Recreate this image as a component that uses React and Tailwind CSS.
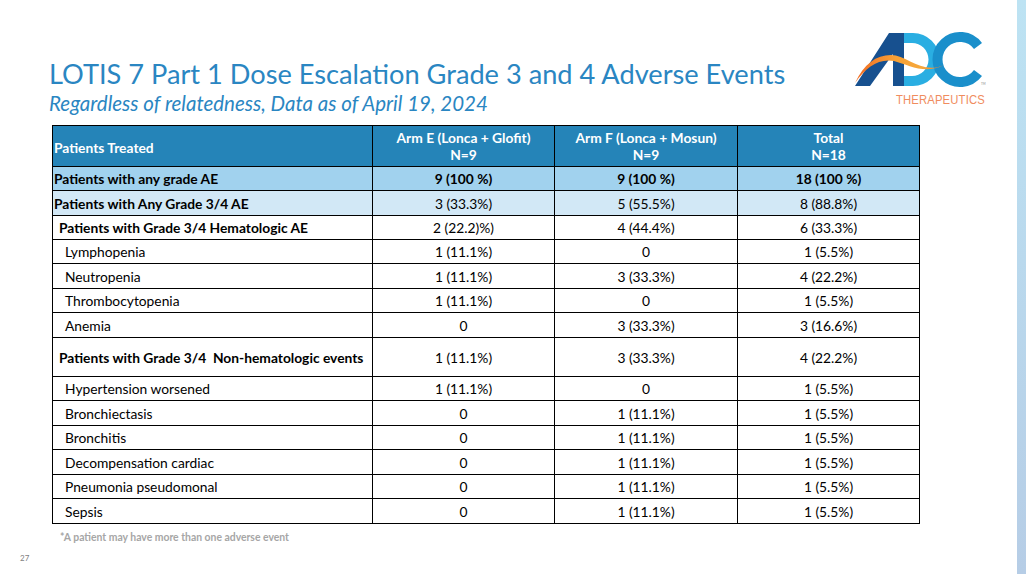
import React from "react";

const font = { fontFamily: "Lato, 'Open Sans', 'Liberation Sans', sans-serif" };

const rows = [
  { label: "Patients with any grade AE", e: "9 (100 %)", f: "9 (100 %)", t: "18 (100 %)", kind: "a" },
  { label: "Patients with Any Grade 3/4 AE", e: "3 (33.3%)", f: "5 (55.5%)", t: "8 (88.8%)", kind: "b" },
  { label: "Patients with Grade 3/4 Hematologic AE", e: "2 (22.2)%)", f: "4 (44.4%)", t: "6 (33.3%)", kind: "c" },
  { label: "Lymphopenia", e: "1 (11.1%)", f: "0", t: "1 (5.5%)", kind: "d" },
  { label: "Neutropenia", e: "1 (11.1%)", f: "3 (33.3%)", t: "4 (22.2%)", kind: "d" },
  { label: "Thrombocytopenia", e: "1 (11.1%)", f: "0", t: "1 (5.5%)", kind: "d" },
  { label: "Anemia", e: "0", f: "3 (33.3%)", t: "3 (16.6%)", kind: "d" },
  { label: "Patients with Grade 3/4\u00a0 Non-hematologic events", e: "1 (11.1%)", f: "3 (33.3%)", t: "4 (22.2%)", kind: "e" },
  { label: "Hypertension worsened", e: "1 (11.1%)", f: "0", t: "1 (5.5%)", kind: "d" },
  { label: "Bronchiectasis", e: "0", f: "1 (11.1%)", t: "1 (5.5%)", kind: "d" },
  { label: "Bronchitis", e: "0", f: "1 (11.1%)", t: "1 (5.5%)", kind: "d" },
  { label: "Decompensation cardiac", e: "0", f: "1 (11.1%)", t: "1 (5.5%)", kind: "d" },
  { label: "Pneumonia pseudomonal", e: "0", f: "1 (11.1%)", t: "1 (5.5%)", kind: "d" },
  { label: "Sepsis", e: "0", f: "1 (11.1%)", t: "1 (5.5%)", kind: "d" },
];

const heights = [24, 25, 24, 24, 25, 24, 25, 39, 24, 25, 24, 25, 24, 25];

function rowBg(kind) {
  if (kind === "a") return "bg-[#a1d2ee]";
  if (kind === "b") return "bg-[#d2e8f6]";
  return "bg-white";
}

function labelCls(kind) {
  if (kind === "a" || kind === "b") return "pl-[1px] font-bold";
  if (kind === "c" || kind === "e") return "pl-[6px] font-bold";
  return "pl-[12px]";
}

function valCls(kind) {
  if (kind === "a") return "font-bold";
  return "";
}

function Logo() {
  return (
    <div className="flex flex-col items-end pt-[27px] mr-[31px]">
      <svg width="136" height="62" viewBox="852 26 136 62">
        <defs>
          <linearGradient id="sw" x1="0" y1="0" x2="1" y2="0">
            <stop offset="0" stopColor="#f26a22" />
            <stop offset="0.45" stopColor="#f7a035" />
            <stop offset="0.75" stopColor="#f6a83b" />
            <stop offset="1" stopColor="#ef7c2a" />
          </linearGradient>
        </defs>
        {/* D */}
        <path
          d="M903 32 H915 A26.5 26.5 0 0 1 915 85 H903 V75 H914 A16.5 16.5 0 0 0 914 42 H903 Z"
          fill="#2aaee2"
        />
        {/* C */}
        <path
          d="M980 45 A22.5 22.5 0 1 0 980 72"
          fill="none"
          stroke="#1a8fcb"
          strokeWidth="10"
        />
        {/* A */}
        <path d="M857 85 L891 32 L906 32 L906 85 L895 85 L895 53 L872 85 Z" fill="#17508f" />
        {/* swoosh */}
        <path
          d="M857 82 C866 63 878 54 893 54 C909 54 924 74 946 64 C927 74 911 64 896 60 C881 57 868 66 857 82 Z"
          fill="url(#sw)"
        />
        <text x="983" y="84" fontSize="3" fill="#888">TM</text>
      </svg>
      <div
        className="mt-[4px] text-[12.5px] leading-[14px] tracking-[0.2px] text-[#f08c5e] mr-[1px]"
        style={{ fontFamily: "'Liberation Sans', Arial, sans-serif", transform: "scaleX(0.9)", transformOrigin: "right" }}
      >
        THERAPEUTICS
      </div>
    </div>
  );
}

export default function App() {
  return (
    <div className="w-[1026px] h-[574px] bg-white flex overflow-hidden" style={font}>
      <div className="flex-1 flex flex-col relative">
        <div className="flex justify-between items-start">
          <div className="pl-[49px] pt-[57px]">
            <div className="text-[27.2px] leading-[34px] text-[#2a86c2] whitespace-nowrap">
              LOTIS 7 Part 1 Dose Escalation Grade 3 and 4 Adverse Events
            </div>
            <div className="text-[20.5px] leading-[24px] italic text-[#2a86c2] whitespace-nowrap">
              Regardless of relatedness, Data as of April 19, 2024
            </div>
          </div>
          <Logo />
        </div>
        <div className="pl-[52px] mt-[auto]">
          <table className="border-collapse text-[13.8px] text-black table-fixed w-[867px]">
            <colgroup>
              <col className="w-[320px]" />
              <col className="w-[182px]" />
              <col className="w-[183px]" />
              <col className="w-[182px]" />
            </colgroup>
            <thead>
              <tr className="h-[41px] bg-[#2584b8] text-white font-bold">
                <td className="border border-black pl-[1px] pt-[3px] leading-[16px]">Patients Treated</td>
                <td className="border border-black text-center leading-[17px]">
                  Arm E (Lonca + Glofit)
                  <br />
                  N=9
                </td>
                <td className="border border-black text-center leading-[17px]">
                  Arm F (Lonca + Mosun)
                  <br />
                  N=9
                </td>
                <td className="border border-black text-center leading-[17px]">
                  Total
                  <br />
                  N=18
                </td>
              </tr>
            </thead>
            <tbody>
              {rows.map((r, i) => (
                <tr key={i} className={rowBg(r.kind)} style={{ height: heights[i] }}>
                  <td className={"border border-black leading-[16px] p-0 pt-[1px] whitespace-nowrap " + labelCls(r.kind)}>{r.label}</td>
                  <td className={"border border-black leading-[16px] p-0 pt-[1px] text-center " + valCls(r.kind)}>{r.e}</td>
                  <td className={"border border-black leading-[16px] p-0 pt-[1px] text-center " + valCls(r.kind)}>{r.f}</td>
                  <td className={"border border-black leading-[16px] p-0 pt-[1px] text-center " + valCls(r.kind)}>{r.t}</td>
                </tr>
              ))}
            </tbody>
          </table>
          <div className="pl-[8px] pt-[7px] text-[10.4px] leading-[12px] font-bold text-[#a6a6a6]">
            *A patient may have more than one adverse event
          </div>
        </div>
        <div className="pl-[20px] pt-[10px] pb-[11px] text-[8px] leading-[10px] text-[#7f7f7f]">27</div>
      </div>
      <div className="w-[9px] bg-gradient-to-b from-[#bde3f3] to-[#b6cde6]" />
    </div>
  );
}
